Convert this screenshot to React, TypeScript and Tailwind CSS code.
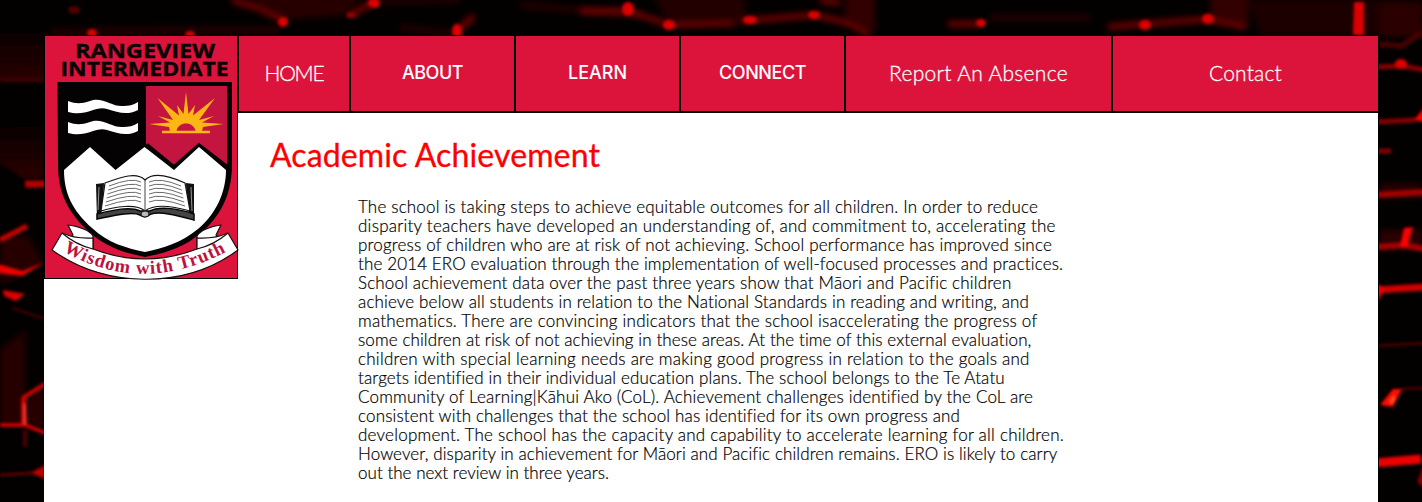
import { useLayoutEffect, useRef } from "react";

/** One line of text whose tracking is computed so that it spans `width` pixels. */
function FitText({ text, width, className = "" }: { text: string; width: number; className?: string }) {
  const ref = useRef<HTMLSpanElement>(null);
  useLayoutEffect(() => {
    const el = ref.current;
    if (!el) return;
    el.style.letterSpacing = "0px";
    const natural = el.getBoundingClientRect().width;
    el.style.letterSpacing = `${(width - natural) / text.length}px`;
  }, [text, width]);
  return (
    <span ref={ref} className={`inline-block whitespace-nowrap ${className}`}>
      {text}
    </span>
  );
}

const lines: [string, number][] = [
  ["The school is taking steps to achieve equitable outcomes for all children. In order to reduce", 680],
  ["disparity teachers have developed an understanding of, and commitment to, accelerating the", 698],
  ["progress of children who are at risk of not achieving. School performance has improved since", 694],
  ["the 2014 ERO evaluation through the implementation of well-focused processes and practices.", 706],
  ["School achievement data over the past three years show that Māori and Pacific children", 653],
  ["achieve below all students in relation to the National Standards in reading and writing, and", 672],
  ["mathematics. There are convincing indicators that the school isaccelerating the progress of", 680],
  ["some children at risk of not achieving in these areas. At the time of this external evaluation,", 674],
  ["children with special learning needs are making good progress in relation to the goals and", 672],
  ["targets identified in their individual education plans. The school belongs to the Te Atatu", 647],
  ["Community of Learning|Kāhui Ako (CoL). Achievement challenges identified by the CoL are", 675],
  ["consistent with challenges that the school has identified for its own progress and", 602],
  ["development. The school has the capacity and capability to accelerate learning for all children.", 706],
  ["However, disparity in achievement for Māori and Pacific children remains. ERO is likely to carry", 699],
  ["out the next review in three years.", 251],
];

function Backdrop() {
  return (
    <svg className="absolute inset-0 h-[502px] w-[1422px]" viewBox="0 0 1422 502" fill="none">
      <defs>
        <filter id="b1" filterUnits="userSpaceOnUse" x="-10" y="-10" width="1442" height="522"><feGaussianBlur stdDeviation="1.5" /></filter>
        <filter id="b3" filterUnits="userSpaceOnUse" x="-10" y="-10" width="1442" height="522"><feGaussianBlur stdDeviation="3" /></filter>
        <linearGradient id="slab" x1="0" y1="0" x2="0" y2="1"><stop stopColor="#080000" /><stop offset="1" stopColor="#2a0000" /></linearGradient>
      </defs>
      <rect width="1422" height="502" fill="#030000" />
      <g filter="url(#b3)">
        <path d="M240-5H362L345 15L285 20Z" fill="#280000" />
        <path d="M652-5H745V20L670 24Z" fill="#200000" />
        <path d="M845-5H875V32L845 20ZM1210-5H1248V26L1210 17Z" fill="#300000" />
        <path d="M1248 0H1422V35H1260Z" fill="#1d0000" />
        <path d="M50 32L180 30L280 30M400 28L460 34M370 2L460 0M520 5L640 15M990 18L1090 18" stroke="#280000" strokeWidth="6" />
      </g>
      <g filter="url(#b3)" stroke="#850000" strokeWidth="5">
        <path d="M232 0L258 8L283 20M350 15L374 2M458 30L474 16M580 11H628L670 25L735 23M740 21L815 15L845 22L870 34M1108 27L1145 24L1208 19L1246 27" />
        <path d="M948 24H980M820 0L840 3" />
      </g>
      <g filter="url(#b1)" fill="#dc0000">
        <ellipse cx="283" cy="22" rx="5" ry="5" />
        <ellipse cx="351" cy="15" rx="5" ry="3" fill="#930000" />
        <ellipse cx="374" cy="3" rx="6" ry="5" />
        <ellipse cx="457" cy="31" rx="5" ry="7" />
        <ellipse cx="92" cy="33" rx="5" ry="4" /><ellipse cx="190" cy="34" rx="5" ry="3" />
        <ellipse cx="74" cy="10" rx="6" ry="4" fill="#500000" />
        <ellipse cx="628" cy="9" rx="6" ry="7" /><ellipse cx="669" cy="25" rx="6" ry="5" />
        <ellipse cx="750" cy="20" rx="7" ry="4" /><ellipse cx="814" cy="15" rx="6" ry="4" />
        <ellipse cx="981" cy="23" rx="5" ry="4" /><ellipse cx="1145" cy="25" rx="6" ry="5" />
        <ellipse cx="1208" cy="19" rx="6" ry="5" />
        <path d="M1354 2H1364V35H1353Z" />
      </g>
      <g filter="url(#b1)">
        <path d="M-5 33H45V79H-5Z" fill="url(#slab)" />
        <path d="M-5 128L44 126V178H22L-5 160Z" fill="url(#slab)" />
      </g>
      <g filter="url(#b3)">
        <path d="M0 235H28L44 263L0 285ZM0 350L25 330V425H0ZM28 395L45 382V430L25 424Z" fill="#250000" />
        <path d="M1379 5H1422V36H1379ZM1379 230H1422V250H1379ZM1379 184H1422V198H1379Z" fill="#2b0000" />
      </g>
      <g filter="url(#b1)">
        <path d="M0 80H44" stroke="#500000" strokeWidth="3" />
        <path d="M25 184H50" stroke="#b50000" strokeWidth="7" />
        <path d="M0 240L27 226" stroke="#c80000" strokeWidth="5" />
        <path d="M-2 264L22 271L45 262L22 276L-2 273Z" fill="#f00000" />
        <path d="M3 290L25 294L16 301L4 296Z" fill="#e00000" />
        <path d="M12 308L45 319" stroke="#500000" strokeWidth="2" />
        <path d="M45 384L24 397L25 425L45 433M0 425H25M23 398V424" stroke="#e00000" strokeWidth="3.500" />
        <path d="M25 404V424" stroke="#ff4030" strokeWidth="2" />
        <path d="M0 475L33 473" stroke="#880000" strokeWidth="2" /><path d="M31 473L45 465V479Z" fill="#c00000" />
        <path d="M25 430V447" stroke="#500000" strokeWidth="4" />
        <path d="M1375 67L1402 66L1425 70M1375 122L1415 120M1375 151H1391" stroke="#850000" strokeWidth="5" />
        <ellipse cx="1401" cy="64" rx="6" ry="5" fill="#e00000" />
        <path d="M1414 120L1424 108V122Z" fill="#ff0500" />
        <path d="M1379 44L1402 46L1422 32" stroke="#450000" strokeWidth="6" />
        <path d="M1375 195L1425 192M1375 247L1404 245L1425 249" stroke="#a20000" strokeWidth="6" />
        <path d="M1404 228L1413 227L1407 247L1400 247Z" fill="#ff0000" />
        <path d="M1375 290L1425 287" stroke="#d00000" strokeWidth="7" /><path d="M1378 283L1384 290L1378 302Z" fill="#f00000" />
        <path d="M1375 346L1425 343M1402 389L1425 388" stroke="#650000" strokeWidth="2" />
        <path d="M1393 389H1402L1393 407L1380 405Z" fill="#ff0900" />
        <path d="M1391 403L1394 397" stroke="#ff6a35" strokeWidth="2" />
        <path d="M1375 463L1421 459" stroke="#ed0000" strokeWidth="9" />
        <path d="M1417 482L1424 464V488Z" fill="#800000" />
      </g>
    </svg>
  );
}

function Crest() {
  return (
    <svg className="block h-[243px] w-[194px] overflow-visible" viewBox="45 36 194 243" fill="none">
      <g fill="#0a0306" fontFamily="'Open Sans'" fontWeight="700" fontSize="19.5" stroke="#0a0306" strokeWidth=".4">
        <text x="75" y="58" textLength="140" lengthAdjust="spacingAndGlyphs">RANGEVIEW</text>
        <text x="60.500" y="76" textLength="168" lengthAdjust="spacingAndGlyphs">INTERMEDIATE</text>
      </g>
      <path d="M57.500 82H232V164C232 188 225 212 202 232C184 248 165 253 145 257C125 253 104 247 87 230C65 209 58 189 58 164Z" fill="#050203" />
      <path d="M146 86H227V166L200 149L174 169L146 147Z" fill="#c41440" />
      <path d="M229 169L199 146L174 168L146 145" stroke="#050203" strokeWidth="5" />
      <path d="M64 170L90 147L115.500 170L144.500 147L174 170L199 147L226 170C226 191 217 213 198 229C181 243 163 248 145 252C126 248 108 243 92 228C72 210 64 193 64 170Z" fill="white" />
      <path d="M68 101C76 104 81 104 90 101C102 96 112 107 123 106C129 106 133 105 138 102V110C126 116 118 112 107 109C96 105 87 117 68 112ZM68 122C76 125 81 125 90 122C102 117 112 128 123 127C129 127 133 126 138 123V131C126 137 118 133 107 130C96 126 87 138 68 133Z" fill="white" />
      <path fill="#fdb614" d="M149 124L170 122.500L158 116L173 120L157.500 98L179 115.500L177 105L183.500 114L186 92L188.500 114L195 105L193 115.500L215 98L199 120L214 116L202 122.500L223.500 124L203 127L202 131H170L169 127Z" />
      <path d="M176.500 131C178 121 194 121 195.500 131Z" fill="#c41440" />
      <path d="M162 132H210" stroke="#fdb614" strokeWidth="2.500" />
      <path d="M96 184L104 183L103 209L97 220ZM194 184L186 183L187 209L194 221Z" fill="#111" />
      <path d="M97 219C112 216 132 211 140 215Q145 219 151 214C161 211 179 216 194 220V214C177 208 158 206 150 211H140C130 206 113 210 97 214Z" fill="#444" stroke="#050505" strokeWidth="1.500" />
      <path d="M105 183C119 178 136 171 145 180C154 171 172 177 185 183L190 211C176 207 155 203 145 211C136 203 114 207 101 211Z" fill="white" stroke="#141414" strokeWidth="1.200" />
      <path d="M145 180V211" stroke="#444" />
      <g stroke="#444" strokeWidth=".8">
        {[0, 4, 8, 12, 16, 20].map((n) => (
          <g key={n}>
            <path d={`M${109 - n * .2} ${186 + n}Q132 ${177 + n} 141 ${182 + n}`} />
            <path d={`M149 ${182 + n}Q160 ${177 + n} ${181 + n * .2} ${186 + n}`} />
          </g>
        ))}
      </g>
      <path d="M99 187L98 210M191 187L192 211" stroke="#999" strokeWidth="1" />
      <ellipse cx="145" cy="214" rx="4" ry="3" fill="#bbb" stroke="#111" />
      <g fill="white" stroke="#170b0e" strokeWidth="1.200" strokeLinejoin="round">
        <path d="M68 225Q88 228 93 236V249L71 238L73 235ZM221 225Q202 228 197 236V249L219 238L216 235Z" />
        <path d="M62 233Q75 239 93 238V249Q145 269 197 249V238Q215 239 228 233L238 250C184 290 105 288 52 250Z" />
        <path d="M62 233Q76 245 93 249M228 233Q214 245 197 249" />
      </g>
      <path id="motto" d="M63 251Q145 298 233 248" />
      <text fill="#bc123d" fontFamily="'Liberation Serif'" fontWeight="700" fontSize="18.500">
        <textPath href="#motto" startOffset="0" textLength="171" lengthAdjust="spacing">Wisdom with Truth</textPath>
      </text>
    </svg>
  );
}

const cell = "flex h-[77px] items-start justify-center border border-black bg-[#dc143c] text-white";

export default function App() {
  return (
    <div className="relative h-[502px] w-[1422px] overflow-hidden bg-black font-['Lato',sans-serif]">
      <Backdrop />
      <div className="relative ml-[44px] flex h-full w-[1335px] flex-col pt-[35px]">
        <div className="flex h-[467px] items-start border-r border-black bg-white">
          <div className="z-10 h-[244px] w-[194px] shrink-0 border border-black bg-[#dc143c]"><Crest /></div>
          <main className="w-[1141px] shrink-0">
            <nav className="flex h-[78px] border-b border-black">
              <a className={`${cell} w-[112px] pt-[25px] text-[21px] leading-6 font-light [-webkit-text-stroke:0.3px_#fff]`}><FitText text="HOME" width={59} /></a>
              <a className={`${cell} w-[165px] pt-[25px] font-['Inter'] text-[18px] leading-6 font-medium`}><FitText text="ABOUT" width={61} /></a>
              <a className={`${cell} w-[165px] pt-[25px] font-['Inter'] text-[18px] leading-6 font-medium`}><FitText text="LEARN" width={59} /></a>
              <a className={`${cell} w-[165px] pt-[25px] font-['Inter'] text-[18px] leading-6 font-medium`}><FitText text="CONNECT" width={87} /></a>
              <a className={`${cell} w-[267px] pt-[25px] text-[21px] leading-6 font-light [-webkit-text-stroke:0.3px_#fff]`}><FitText text="Report An Absence" width={179} /></a>
              <a className={`${cell} w-[267px] pt-[25px] text-[21px] leading-6 font-light [-webkit-text-stroke:0.3px_#fff]`}><FitText text="Contact" width={73} /></a>
            </nav>
            <h1 className="mt-[23px] ml-[32px] h-[38px] text-[32px] leading-[38px] text-[#ff0000] [-webkit-text-stroke:0.3px_#ff0000]">
              <FitText text="Academic Achievement" width={330} />
            </h1>
            <div className="mt-[23px] ml-[120px] flex flex-col text-[17px] leading-[19px] text-black">
              {lines.map(([text, width]) => (
                <div key={text} className="h-[19px]"><FitText text={text} width={width} className="font-light [-webkit-text-stroke:0.2px_#000]" /></div>
              ))}
            </div>
          </main>
        </div>
      </div>
    </div>
  );
}
